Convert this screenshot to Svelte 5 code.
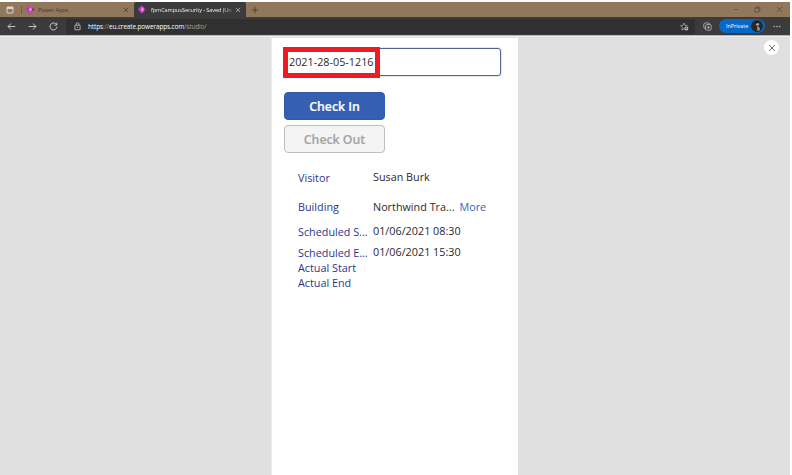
<script>
  const rows = [
    { label: 'Visitor', value: 'Susan Burk', height: 29, lift: 1 },
    { label: 'Building', value: 'Northwind Tra...', more: true, height: 25, lift: 0 },
    { label: 'Scheduled S...', value: '01/06/2021 08:30', height: 21, lift: 1 },
    { label: 'Scheduled E...', value: '01/06/2021 15:30', height: 15, lift: 1 },
    { label: 'Actual Start', value: '', height: 15, lift: 0 },
    { label: 'Actual End', value: '', height: 15, lift: 0 }
  ];
</script>

{#snippet logo()}
  <svg class="logo" width="9" height="9" viewBox="0 0 9 9">
    <path d="M3.5.4 0 4.5l3.5 4.1L8.8 4.5z" fill="#8b1f86" />
    <path d="M3.5.4 0 4.5l3.5 4.1z" fill="#c43bb8" />
    <path d="M3.5.4 6.3 3.2v2.6L3.5 8.6z" fill="#e35bd8" />
    <path d="M3.5 3 5.6 4.5 3.5 6z" fill="#f6b5ef" />
  </svg>
{/snippet}

{#snippet cross(size, color)}
  <svg width={size} height={size} viewBox="0 0 6 6">
    <path d="M.8.8 5.2 5.2M5.2.8.8 5.2" fill="none" stroke={color} stroke-width=".65" />
  </svg>
{/snippet}

<div class="browser">
  <header class="tabs">
    <div class="menu">
      <svg width="8" height="8" viewBox="0 0 8 8">
        <rect x="1" y="1" width="6" height="6" rx=".8" fill="none" stroke="#e6dfd8" stroke-width=".9" />
        <path d="M1 2h6" stroke="#e6dfd8" stroke-width="1.8" />
      </svg>
    </div>
    <div class="tab">
      {@render logo()}
      <span class="title">Power Apps</span>
      {@render cross(6, '#3d3023')}
    </div>
    <div class="tab active">
      {@render logo()}
      <span class="title">fpmCampusSecurity - Saved (Un</span>
      {@render cross(6, '#d5d5d5')}
    </div>
    <svg class="plus" width="8" height="8" viewBox="0 0 8 8"><path d="M4 .8v6.4M.8 4h6.4" stroke="#4d3d2c" stroke-width=".9" /></svg>
    <div class="window">
      <svg width="6" height="7" viewBox="0 0 6 7"><path d="M.8 3.5h4.4" stroke="#65523e" stroke-width=".8" /></svg>
      <svg width="7" height="7" viewBox="0 0 7 7"><path d="M1 2h4v4H1zM2.2 2V1h3.7v3.8H5" fill="none" stroke="#5a4835" stroke-width=".7" /></svg>
      {@render cross(7, '#5a4835')}
    </div>
  </header>

  <nav class="toolbar">
    <svg width="9" height="9" viewBox="0 0 9 9"><path d="M8.3 4.5H1M4 1.5l-3 3 3 3" fill="none" stroke="#d4d4d4" stroke-width=".9" /></svg>
    <svg width="9" height="9" viewBox="0 0 9 9"><path d="M.7 4.5H8M5 1.5l3 3-3 3" fill="none" stroke="#d4d4d4" stroke-width=".9" /></svg>
    <svg width="9" height="9" viewBox="0 0 9 9"><path d="M7.6 2.8a3.5 3.5 0 1 0 .4 2M7.8.7v2.4H5.4" fill="none" stroke="#d4d4d4" stroke-width=".9" /></svg>
    <div class="address">
      <svg width="7" height="9" viewBox="0 0 7 9"><path d="M.9 3.2h5.2v4.6H.9zM2.2 3V1.8q0-1.1 1.3-1.1t1.3 1.1V3" fill="none" stroke="#c9c9c9" stroke-width=".8" /><circle cx="3.5" cy="5.5" r=".6" fill="#c9c9c9" /></svg>
      <span class="url"><b>https</b>://<b>eu.create.powerapps.com</b>/studio/</span>
      <svg class="star" width="9" height="9" viewBox="0 0 9 9"><path d="M4.1 7 1.9 8l.4-2.5L.6 3.7l2.4-.4L4.1 1l1.1 2.3 2.5.4" fill="none" stroke="#bdbdbd" stroke-width=".7" /><circle cx="6.3" cy="6.4" r="2" fill="#c9c9c9" /><path d="M6.3 5.2v2.4M5.1 6.4h2.4" stroke="#333" stroke-width=".6" /></svg>
    </div>
    <svg class="collections" width="9" height="9" viewBox="0 0 9 9"><path d="M2.5 6.9Q1.2 6.7 1 5.6L.7 2.6Q.6 1.4 1.8 1.2L4.9.8Q6.3.7 6.6 2.1" fill="none" stroke="#c4c4c4" stroke-width=".75" /><rect x="2.6" y="2.5" width="5.6" height="5.6" rx="1.2" fill="none" stroke="#c4c4c4" stroke-width=".75" /><path d="M5.4 3.8v3M3.9 5.3h3" stroke="#c4c4c4" stroke-width=".75" /></svg>
    <div class="private">
      <span>InPrivate</span>
      <svg width="12" height="12" viewBox="0 0 12 12"><circle cx="6" cy="6" r="6" fill="#26282d" /><circle cx="6.5" cy="4" r="1.8" fill="#b9a394" /><path d="M4.3 4.1q-.1-2.5 2.1-2.3 2 .1 1.8 2l-1.5-.7z" fill="#111" /><path d="M6 6.2q3 0 3.1 3.8L6.4 11z" fill="#8f929a" /></svg>
    </div>
    <svg class="dots" width="8" height="3" viewBox="0 0 8 3" fill="#d8d8d8"><circle cx="1.2" cy="1.5" r=".65" /><circle cx="4" cy="1.5" r=".65" /><circle cx="6.8" cy="1.5" r=".65" /></svg>
  </nav>

  <main>
    <section class="app">
      <div class="field">
        <span class="mark">2021-28-05-1216</span>
      </div>
      <button class="in">Check In</button>
      <button class="out" disabled>Check Out</button>
      <div class="details">
        {#each rows as row}
          <div class="row" style="height: {row.height}px">
            <span class="label">{row.label}</span>
            <span class="value" style="margin-top: {-row.lift}px">{row.value}</span>
            {#if row.more}<a href="#more">More</a>{/if}
          </div>
        {/each}
      </div>
    </section>
    <div class="close">{@render cross(8, '#555')}</div>
  </main>
</div>

<style>
  :global(body) {
    margin: 0;
    background: #fff;
  }
  .browser {
    box-sizing: border-box;
    width: 792px;
    height: 475px;
    padding: 2px 2px 0 0;
    display: flex;
    flex-direction: column;
    overflow: hidden;
    font-family: "Open Sans", sans-serif;
  }
  svg {
    display: block;
    flex: none;
  }
  .tabs {
    display: flex;
    align-items: center;
    height: 15px;
    background: #91785d;
  }
  .menu {
    box-sizing: border-box;
    width: 22px;
    padding-left: 6px;
    border-right: 1px solid #715c46;
  }
  .tab {
    box-sizing: border-box;
    display: flex;
    align-items: center;
    width: 112px;
    height: 15px;
    padding: 0 5px 0 4px;
    font-size: 5.6px;
    color: #443627;
  }
  .title {
    flex: 1;
    margin-left: 3px;
    white-space: nowrap;
    letter-spacing: -0.08px;
  }
  .tab.active {
    background: #3b3b3b;
    color: #f0f0f0;
    border-radius: 2px 2px 0 0;
  }
  .active .title {
    margin-left: 4px;
    font-size: 5.6px;
    letter-spacing: -0.1px;
    mask-image: linear-gradient(90deg, #000 84%, rgba(0, 0, 0, 0.25) 98%);
  }
  .plus {
    margin-left: 5px;
  }
  .window {
    display: flex;
    align-items: center;
    gap: 15px;
    margin: 0 7px 0 auto;
  }
  .toolbar {
    box-sizing: border-box;
    display: flex;
    align-items: center;
    height: 18px;
    padding-left: 7px;
    gap: 12px;
    background: #3b3b3b;
  }
  .address {
    box-sizing: border-box;
    display: flex;
    align-items: center;
    width: 629px;
    height: 15px;
    margin-left: -4px;
    padding: 0 6px 0 8px;
    border-radius: 2px;
    background: #303030;
  }
  .url {
    margin-left: 7px;
    font-size: 6.4px;
    letter-spacing: -0.1px;
    color: #a0a0a0;
    white-space: nowrap;
  }
  .url b {
    font-weight: 400;
    color: #fff;
  }
  .star {
    margin-left: auto;
  }
  .collections {
    margin-left: -4px;
  }
  .private {
    box-sizing: border-box;
    display: flex;
    align-items: center;
    justify-content: space-between;
    width: 46px;
    height: 14px;
    margin-left: -5px;
    padding: 0 2px 0 7px;
    border-radius: 7px;
    background: #0769c5;
    color: #fff;
    font-size: 5.4px;
    line-height: 14px;
    white-space: nowrap;
  }
  .dots {
    margin-left: -4px;
  }
  main {
    position: relative;
    flex: 1;
    padding-top: 3px;
    display: flex;
    background: #e0e0e0;
    box-shadow: inset 0 1px #b5b5b5, inset 0 2px #ededed;
  }
  .app {
    box-sizing: border-box;
    width: 247px;
    margin-left: 271px;
    padding: 10px 17px 0 12px;
    border-left: 1px solid #eee;
    background: #fff;
    font-size: 10.8px;
    color: #2a2a2a;
  }
  .field {
    box-sizing: border-box;
    display: flex;
    align-items: flex-start;
    width: 217px;
    height: 28px;
    border: 1px solid #5360a0;
    box-shadow: 0 0 0 0.5px #5360a055;
    border-radius: 3px;
  }
  .mark {
    box-sizing: border-box;
    flex: none;
    width: 97px;
    height: 31px;
    margin: -2px 0 0 -2px;
    padding-left: 1px;
    border: 5px solid #ed1c24;
    background: #fff;
    line-height: 20px;
    white-space: nowrap;
  }
  button {
    box-sizing: border-box;
    display: block;
    width: 101px;
    height: 28px;
    padding: 1px 0 0;
    border-radius: 4px;
    font: 600 12.3px/25px "Open Sans", sans-serif;
  }
  .in {
    margin-top: 15.5px;
    border: 1px solid #305bad;
    background: #355fb3;
    color: #fff;
    -webkit-text-stroke: 0.2px;
  }
  .out {
    margin-top: 5.5px;
    border: 1px solid #bebebe;
    background: #f4f4f4;
    color: #a6a6a6;
    -webkit-text-stroke: 0.2px;
  }
  .details {
    padding: 17.4px 0 0 14px;
    line-height: 15px;
  }
  .row {
    display: flex;
    align-items: flex-start;
    white-space: nowrap;
  }
  .label {
    width: 75px;
    color: #2b3689;
  }
  a {
    margin-left: 5px;
    color: #3566bd;
    text-decoration: none;
  }
  .close {
    position: absolute;
    top: 5px;
    right: 11px;
    display: flex;
    align-items: center;
    justify-content: center;
    width: 15px;
    height: 15px;
    border-radius: 50%;
    background: #fff;
  }
</style>
